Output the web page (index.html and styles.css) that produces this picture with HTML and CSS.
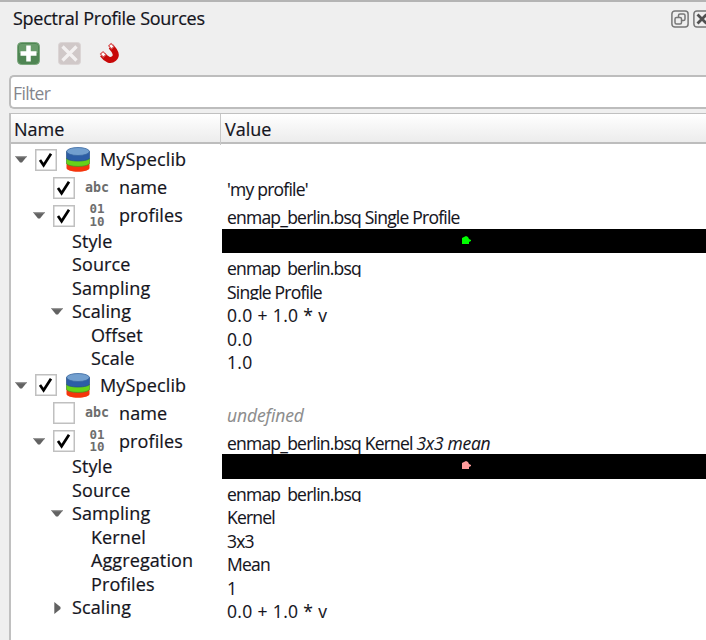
FILE: index.html
```html
<!DOCTYPE html>
<html lang="en">
<head>
<meta charset="utf-8">
<title>Spectral Profile Sources</title>
<link rel="stylesheet" href="styles.css">
</head>
<body>
<svg width="0" height="0" class="defs">
  <defs>
    <symbol id="db" viewBox="0 0 24 25">
      <path d="M.5 16v5c0 2 5 3.800 11.500 3.800S23.500 23 23.500 21v-5z" fill="#f5350c"/>
      <path d="M.5 11v5c0 2 5 3.400 11.500 3.400S23.500 18 23.500 16v-5z" fill="#66d318" stroke="#438c27" stroke-width=".7"/>
      <path d="M.5 4.500v6.300c0 2 5 3.200 11.500 3.200s11.500-1.200 11.500-3.200V4.500z" fill="#2c5da6" stroke="#244d83" stroke-width=".7"/>
      <ellipse cx="12" cy="4.500" rx="11.400" ry="4" fill="#729fcf" stroke="#37669f" stroke-width=".8"/>
    </symbol>
    <symbol id="check" viewBox="0 0 22 22">
      <rect x=".75" y=".75" width="20.500" height="20.500" fill="#fff" stroke="#c0c0c0" stroke-width="1.500"/>
      <path d="M5 11l3.600 5.300L16 4.800" fill="none" stroke="#000" stroke-width="2.700"/>
    </symbol>
    <symbol id="uncheck" viewBox="0 0 22 22">
      <rect x=".75" y=".75" width="20.500" height="20.500" fill="#fff" stroke="#c0c0c0" stroke-width="1.500"/>
    </symbol>
    <symbol id="down" viewBox="0 0 12 7"><path d="M0 .3h12L7 6.500H5z" fill="#626262"/><path d="M0 0h12v1.300H1z" fill="#999"/></symbol>
    <symbol id="right" viewBox="0 0 7 12"><path d="M.3 0L6.500 5v2L.3 12z" fill="#626262"/></symbol>
  </defs>
</svg>
<div class="dock">
  <header class="titlebar">
    <span class="title">Spectral Profile Sources</span>
    <svg class="float" width="18" height="18" viewBox="0 0 18 18" fill="none" stroke="#777"><rect x=".9" y=".9" width="16.200" height="16.200" rx="3" stroke-width="1.500"/><rect x="7.500" y="4" width="6.500" height="6.500" rx="1.500" stroke-width="1.500"/><rect x="4" y="7.500" width="6.500" height="6.500" rx="1.500" stroke-width="1.500" fill="#efefef"/></svg>
    <svg class="close" width="18" height="18" viewBox="0 0 18 18" fill="none"><rect x=".9" y=".9" width="16.200" height="16.200" rx="3" stroke="#777" stroke-width="1.500"/><path d="M4.500 4.500l9 9m0-9l-9 9" stroke="#505050" stroke-width="2.800"/></svg>
  </header>
  <div class="toolbar">
    <svg width="23" height="23" viewBox="0 0 23 23"><rect x=".5" y=".5" width="22" height="22" rx="4" fill="#4f8553" stroke="#7ba77d"/><path d="M2 4q0-2 2-2h15q2 0 2 2v7H2z" fill="#689b6a"/><path d="M11.500 3.500v16M3.500 11.500h16" stroke="#fff" stroke-width="4.500"/></svg>
    <svg width="23" height="23" viewBox="0 0 23 23"><rect x=".5" y=".5" width="22" height="22" rx="3" fill="#d0c8c8" stroke="#dbd5d5"/><path d="M4.500 4.500l14 14m0-14l-14 14" stroke="#f3f0f0" stroke-width="3.300"/></svg>
    <svg width="23" height="23" viewBox="0 0 23 23"><path d="M4.500 12.500c4 5.500 8 7 11.500 4s1.500-7-3-12" fill="none" stroke="#c80808" stroke-width="6"/><path d="M2.500 12l2.600-2.300 2.900 3-2.700 2.500zM10.700 3.800l2.400-2.300 3 3-2.600 2.400z" fill="#fff" stroke="#d65050" stroke-width="1.100"/></svg>
  </div>
  <div class="filter"><span>Filter</span></div>
  <main class="tree">
    <div class="head"><div>Name</div><div>Value</div></div>

    <div class="row tall l0"><div class="n"><svg class="ar"><use href="#down"/></svg><svg class="cb"><use href="#check"/></svg><svg class="db"><use href="#db"/></svg><span>MySpeclib</span></div><div class="v"></div></div>
    <div class="row tall l1"><div class="n"><i class="ar"></i><svg class="cb"><use href="#check"/></svg><b class="abc">abc</b><span>name</span></div><div class="v"><span>'my profile'</span></div></div>
    <div class="row tall l1"><div class="n"><svg class="ar"><use href="#down"/></svg><svg class="cb"><use href="#check"/></svg><b class="bin">01<br>10</b><span>profiles</span></div><div class="v"><span>enmap_berlin.bsq Single Profile</span></div></div>
    <div class="row l2"><div class="n"><span>Style</span></div><div class="v bar"><svg class="mark green" width="9" height="8" viewBox="0 0 9 8"><path d="M0 2l2-1 2-1 2 1 1 2 2 1v1L7 6v2H0z"/></svg></div></div>
    <div class="row l2"><div class="n"><span>Source</span></div><div class="v"><span>enmap_berlin.bsq</span></div></div>
    <div class="row l2"><div class="n"><span>Sampling</span></div><div class="v"><span>Single Profile</span></div></div>
    <div class="row l2"><div class="n"><svg class="ar"><use href="#down"/></svg><span>Scaling</span></div><div class="v num"><span>0.0 + 1.0 * v</span></div></div>
    <div class="row l3"><div class="n"><span>Offset</span></div><div class="v num"><span>0.0</span></div></div>
    <div class="row l3"><div class="n"><span>Scale</span></div><div class="v num"><span>1.0</span></div></div>

    <div class="row tall l0"><div class="n"><svg class="ar"><use href="#down"/></svg><svg class="cb"><use href="#check"/></svg><svg class="db"><use href="#db"/></svg><span>MySpeclib</span></div><div class="v"></div></div>
    <div class="row tall l1"><div class="n"><i class="ar"></i><svg class="cb"><use href="#uncheck"/></svg><b class="abc">abc</b><span>name</span></div><div class="v"><span class="undef">undefined</span></div></div>
    <div class="row tall l1"><div class="n"><svg class="ar"><use href="#down"/></svg><svg class="cb"><use href="#check"/></svg><b class="bin">01<br>10</b><span>profiles</span></div><div class="v"><span>enmap_berlin.bsq Kernel <em>3x3 mean</em></span></div></div>
    <div class="row l2"><div class="n"><span>Style</span></div><div class="v bar"><svg class="mark pink" width="9" height="8" viewBox="0 0 9 8"><path d="M0 2l2-1 2-1 2 1 1 2 2 1v1L7 6v2H0z"/></svg></div></div>
    <div class="row l2"><div class="n"><span>Source</span></div><div class="v"><span>enmap_berlin.bsq</span></div></div>
    <div class="row l2"><div class="n"><svg class="ar"><use href="#down"/></svg><span>Sampling</span></div><div class="v"><span>Kernel</span></div></div>
    <div class="row l3"><div class="n"><span>Kernel</span></div><div class="v"><span>3x3</span></div></div>
    <div class="row l3"><div class="n"><span>Aggregation</span></div><div class="v"><span>Mean</span></div></div>
    <div class="row l3"><div class="n"><span>Profiles</span></div><div class="v num"><span>1</span></div></div>
    <div class="row l2"><div class="n"><svg class="ar side"><use href="#right"/></svg><span>Scaling</span></div><div class="v num"><span>0.0 + 1.0 * v</span></div></div>
  </main>
</div>
</body>
</html>
```

FILE: styles.css
```css
* { box-sizing: border-box; }
html, body { margin: 0; height: 640px; overflow: hidden; }
body {
  background: #efefef;
  color: #14141c;
  font: 18px/1.2 "Open Sans", "Noto Sans", sans-serif;
  -webkit-text-stroke: .2px currentColor;
}
.defs { display: block; height: 0; }
.dock {
  width: 706px;
  height: 640px;
  border-top: 2px solid #b4b4b4;
  display: flex;
  flex-direction: column;
  overflow: hidden;
}
.titlebar {
  display: flex;
  align-items: center;
  height: 33px;
  flex: none;
  padding-left: 13px;
}
.title { flex: 1; white-space: nowrap; letter-spacing: -.26px; }
.titlebar svg { flex: none; }
.float { margin-right: 4px; }
.close { margin-right: -5px; }
.toolbar {
  display: flex;
  gap: 17.500px;
  height: 40px;
  flex: none;
  padding: 7px 0 0 17px;
}
.toolbar svg { flex: none; }
.filter {
  flex: none;
  height: 34px;
  margin-left: 9px;
  padding-left: 2px;
  border: 2px solid #bdbdbd;
  border-right: 0;
  border-radius: 5px 0 0 5px;
  background: #fff;
  color: #85858c;
  font-size: 17.500px;
  line-height: 33px;
  letter-spacing: -.65px;
  -webkit-text-stroke: 0;
}
.tree {
  flex: 1;
  margin: 4px 0 0 9px;
  border: solid #c0c0c0;
  border-width: 1.500px 0 0 2px;
  background: #fff;
}
.head {
  display: grid;
  grid-template-columns: 209px 1fr;
  height: 30px;
  border-bottom: 2px solid #bdbdbd;
  background: linear-gradient(#fff, #ececec);
  line-height: 31px;
}
.head div { padding-left: 3px; }
.head div + div { border-left: 1px solid #c8c8c8; padding-left: 4px; }
.row {
  display: grid;
  grid-template-columns: 211px 1fr;
  height: 23.500px;
  line-height: 24.800px;
}
.row.tall { height: 28.200px; line-height: 31px; }
.n {
  display: flex;
  align-items: center;
  white-space: nowrap;
  height: 100%;
  letter-spacing: .1px;
}
.n span { height: 100%; }
.l0 .n { padding-left: 4px; letter-spacing: .15px; }
.l1 .n { padding-left: 22px; }
.l2 .n { padding-left: 61px; }
.l3 .n { padding-left: 80px; }
.ar { flex: none; width: 12px; height: 7px; margin-right: 8px; }
.l2 .ar { margin: 0 9px 0 -21px; }
.l2 .ar.side { width: 7px; height: 12px; margin: 0 11px 0 -18px; }
.cb { flex: none; width: 22px; height: 22px; margin-right: 10px; }
.db { flex: none; width: 24px; height: 25px; margin: 0 10px 0 -1px; }
.l0 .cb { margin-right: 10px; }
.abc, .bin {
  flex: none;
  width: 24px;
  margin-right: 10px;
  color: #6d6d6d;
  font-family: "DejaVu Sans Mono", monospace;
  text-align: center;
  letter-spacing: 0;
  -webkit-text-stroke: 0;
}
.abc { font-size: 13.300px; line-height: 20px; }
.bin { font-size: 12.500px; line-height: 12.500px; }
.v {
  overflow: hidden;
  white-space: nowrap;
  padding: 5px 0 0 5px;
  height: 100%;
  font-size: 17.500px;
  line-height: 23.500px;
  letter-spacing: -.78px;
  -webkit-text-stroke: .1px currentColor;
}
.tall .v { padding-top: 2px; line-height: 30px; }
.v span { display: block; }
.v.num { letter-spacing: .35px; }
.v .undef { font-style: italic; color: #8c8c8c; letter-spacing: -.1px; }
.v em { letter-spacing: -.3px; }
.v.bar { background: #000; padding: 7px 0 0 240px; }
.mark { display: block; }
.green { fill: #0f0; }
.pink { fill: #ff9c9c; }
```
